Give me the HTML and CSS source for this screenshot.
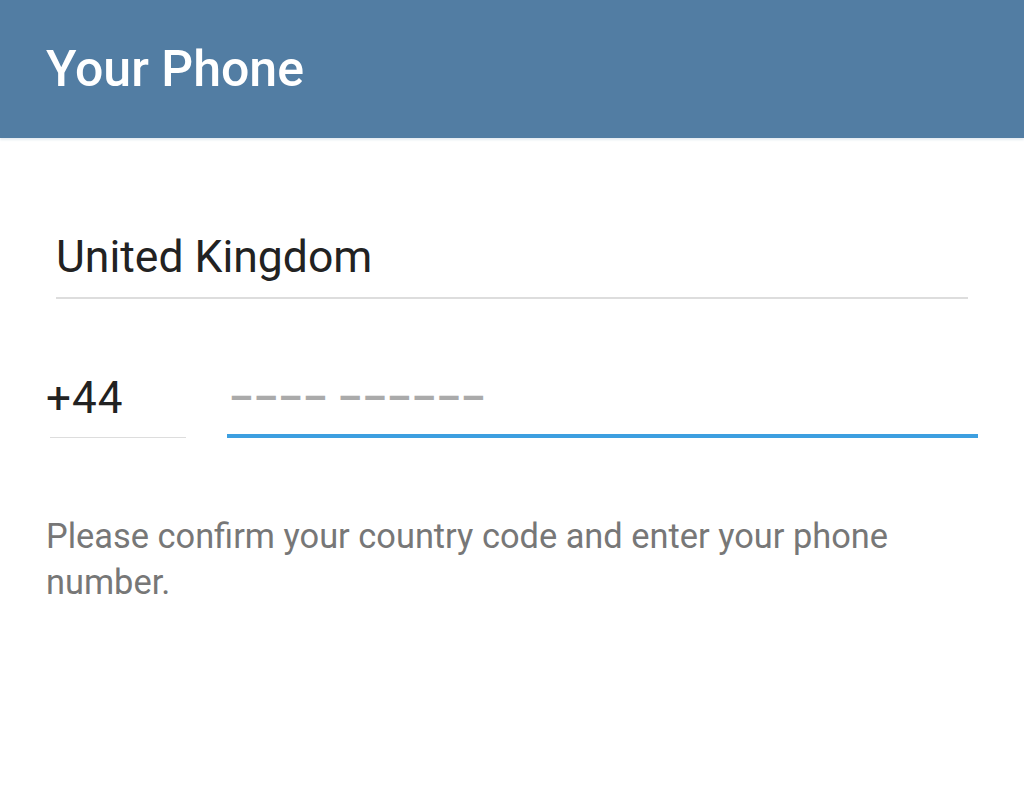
FILE: index.html
```html
<!DOCTYPE html>
<html lang="en">
<head>
  <meta charset="UTF-8">
  <meta name="viewport" content="width=device-width, initial-scale=1.0">
  <title>Your Phone</title>
  <link rel="stylesheet" href="styles.css">
</head>
<body>

  <div class="header">
    <h1 class="title">Your Phone</h1>
  </div>

  <div class="content">
    <div class="country">United Kingdom</div>

    <div class="phone-row">
      <div class="code">+44</div>
      <div class="number"><span class="placeholder">–––– ––––––</span></div>
    </div>

    <p class="hint">Please confirm your country code and enter your phone number.</p>
  </div>

</body>
</html>
```

FILE: styles.css
```css
body {
  margin: 0;
  background-color: #ffffff;
  font-family: Roboto, "Noto Sans", sans-serif;
}

.header {
  height: 138px;
  display: flex;
  align-items: center;
  padding-left: 46px;
  background-color: #527da3;
  box-shadow: 0 2px 2px rgba(82, 125, 163, 0.15);
}

.title {
  margin: 0;
  font-size: 50px;
  line-height: 1;
  font-weight: 500;
  color: #ffffff;
}

.content {
  padding-top: 93px;
}

.country {
  margin: 0 56px;
  padding-bottom: 14px;
  font-size: 44.5px;
  line-height: 52px;
  color: #222222;
  border-bottom: 2px solid #dddddd;
}

.phone-row {
  display: flex;
  align-items: flex-end;
  margin-top: 73px;
}

/* code field */
.code {
  width: 136px;
  margin-left: 50px;
  padding-bottom: 13px;
  text-indent: -4px;
  font-size: 44px;
  line-height: 52px;
  letter-spacing: 1px;
  color: #222222;
  border-bottom: 1px solid #dddddd;
}

.number {
  box-sizing: border-box;
  width: 751px;
  height: 66px;
  margin-left: 41px;
  padding-bottom: 10px;
  padding-left: 2px;
  border-bottom: 4px solid #3d9fe0;
}

.placeholder {
  font-size: 38px;
  line-height: 52px;
  font-weight: 700;
  letter-spacing: 0.7px;
  color: #aaaaaa;
}

.hint {
  margin: 75px 46px 0;
  font-size: 34.4px;
  line-height: 46px;
  color: #777777;
}
```
